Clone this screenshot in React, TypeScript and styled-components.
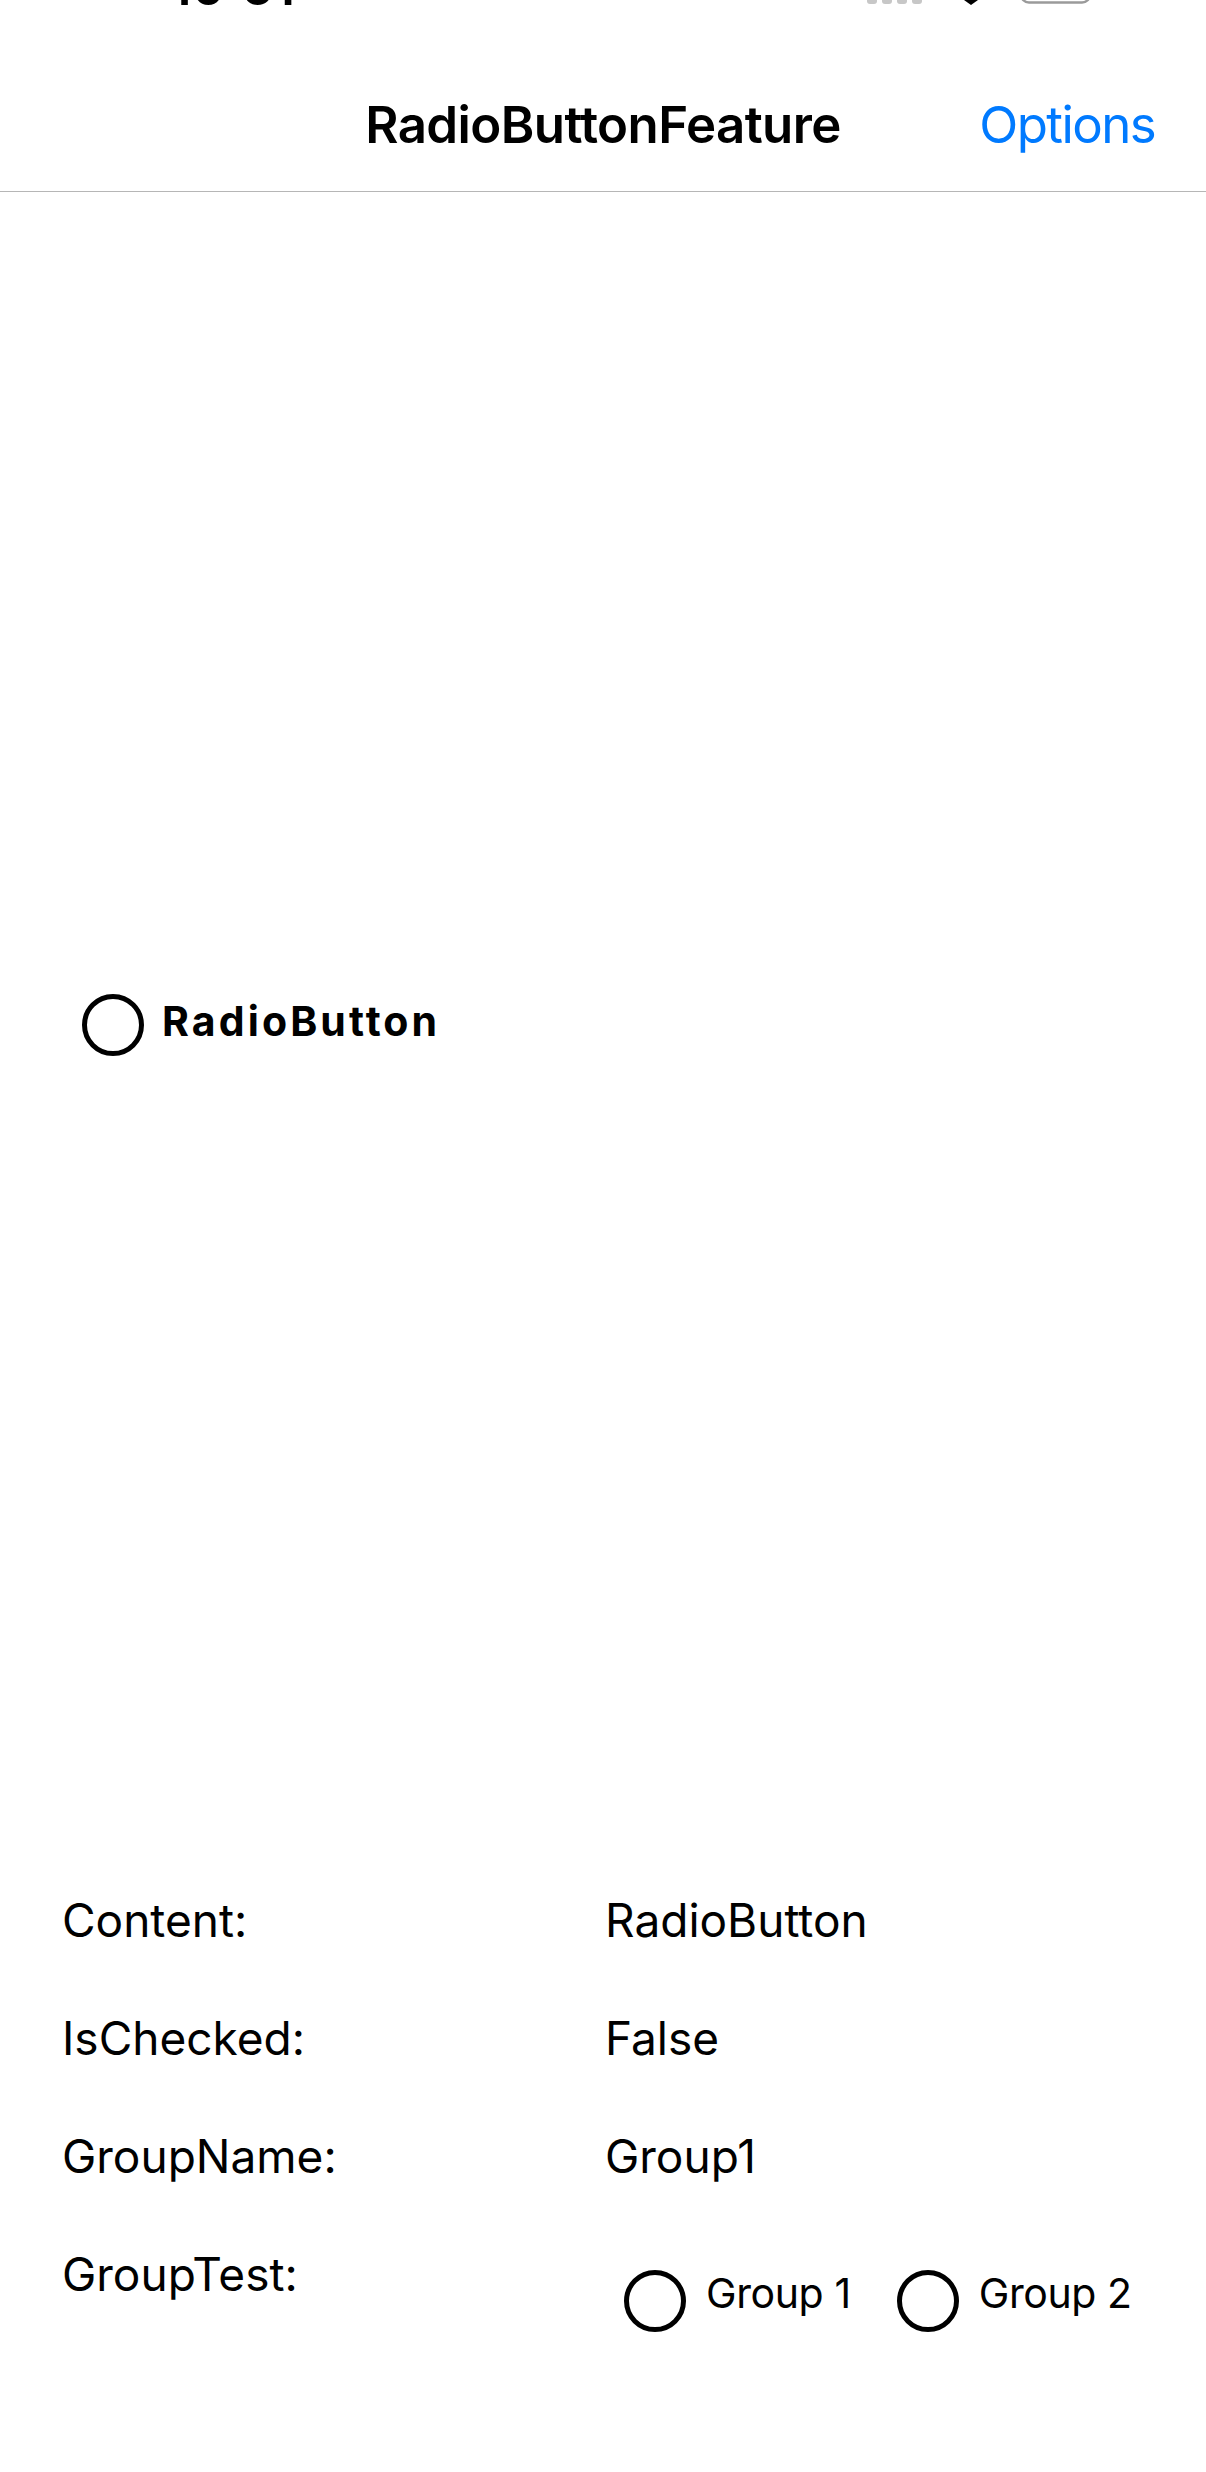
import styled, { createGlobalStyle } from 'styled-components'

const GlobalStyle = createGlobalStyle`
  html, body {
    margin: 0;
    padding: 0;
    background: #ffffff;
  }
  body {
    font-family: Inter, 'Noto Sans', sans-serif;
    color: #000000;
    -webkit-font-smoothing: antialiased;
  }
`

const Page = styled.div`
  width: 1206px;
  min-height: 2472px;
  background: #ffffff;
`

const StatusBar = styled.div`
  height: 10px;
  overflow: hidden;
  display: flex;
  align-items: flex-end;
  padding-left: 170px;
`

const Time = styled.span`
  font-weight: 600;
  font-size: 51px;
  line-height: 51px;
  margin-bottom: -2px;
`

const StatusIcons = styled.svg`
  align-self: flex-start;
  margin-left: auto;
  margin-right: 106px;
`

const NavBar = styled.header`
  box-sizing: border-box;
  height: 182px;
  display: grid;
  grid-template-columns: 1fr auto 1fr;
  align-items: end;
  padding: 0 51px 41px;
  border-bottom: 1px solid #b6b6b6;
`

const NavTitle = styled.div`
  grid-column: 2;
  font-weight: 600;
  font-size: 51px;
  line-height: 51px;
  letter-spacing: -0.6px;
`

const NavAction = styled.div`
  justify-self: end;
  font-weight: 400;
  font-size: 51px;
  line-height: 51px;
  letter-spacing: -1.6px;
  color: #007aff;
`

const Content = styled.main`
  padding-top: 802px;
`

const RadioRow = styled.div<{ $gap: number }>`
  display: flex;
  align-items: center;
  gap: ${(p) => p.$gap}px;
`

const RadioCircle = styled.span`
  box-sizing: border-box;
  flex: none;
  width: 62px;
  height: 62px;
  border: 5px solid #000000;
  border-radius: 50%;
`

const FeatureRadio = styled.div`
  padding-left: 82px;
`

const FeatureLabel = styled.span`
  font-weight: 700;
  font-size: 41px;
  letter-spacing: 3.1px;
  margin-bottom: 8px;
`

const DetailGrid = styled.section`
  display: grid;
  grid-template-columns: 543px 1fr;
  grid-auto-rows: 118px;
  padding-left: 62px;
  margin-top: 836px;
`

const DetailText = styled.div`
  font-size: 46px;
  line-height: 56px;
`

const GroupList = styled.div`
  align-self: start;
  display: flex;
  align-items: center;
  gap: 46px;
  padding: 22px 0 0 19px;
`

const GroupLabel = styled.span`
  font-size: 41px;
  letter-spacing: -0.4px;
  margin-bottom: 16px;
`

const details = [
  { label: 'Content:', value: 'RadioButton' },
  { label: 'IsChecked:', value: 'False' },
  { label: 'GroupName:', value: 'Group1' },
]

const App = () => {
  return (
    <>
      <GlobalStyle />
      <Page>
        <StatusBar>
          <Time>10:51</Time>
          <StatusIcons width='240' height='10' viewBox='0 0 240 10'>
            {[7, 22, 37, 52].map((x) => (
              <rect key={x} x={x} y={-10} width={10} height={14} rx={3} fill='#c7c7c7' />
            ))}
            <path d='M104 0 L118 0 L111 5 Z' fill='#000000' />
            <rect
              x={161}
              y={-22}
              width={69}
              height={24.5}
              rx={8}
              fill='none'
              stroke='#9a9a9a'
              strokeWidth={2.5}
            />
          </StatusIcons>
        </StatusBar>
        <NavBar>
          <NavTitle>RadioButtonFeature</NavTitle>
          <NavAction>Options</NavAction>
        </NavBar>
        <Content>
          <FeatureRadio>
            <RadioRow $gap={18}>
              <RadioCircle />
              <FeatureLabel>RadioButton</FeatureLabel>
            </RadioRow>
          </FeatureRadio>
          <DetailGrid>
            {details.map((d) => (
              <>
                <DetailText key={d.label}>{d.label}</DetailText>
                <DetailText key={d.value}>{d.value}</DetailText>
              </>
            ))}
            <DetailText>GroupTest:</DetailText>
            <GroupList>
              {['Group 1', 'Group 2'].map((g) => (
                <RadioRow key={g} $gap={20}>
                  <RadioCircle />
                  <GroupLabel>{g}</GroupLabel>
                </RadioRow>
              ))}
            </GroupList>
          </DetailGrid>
        </Content>
      </Page>
    </>
  )
}

export default App
